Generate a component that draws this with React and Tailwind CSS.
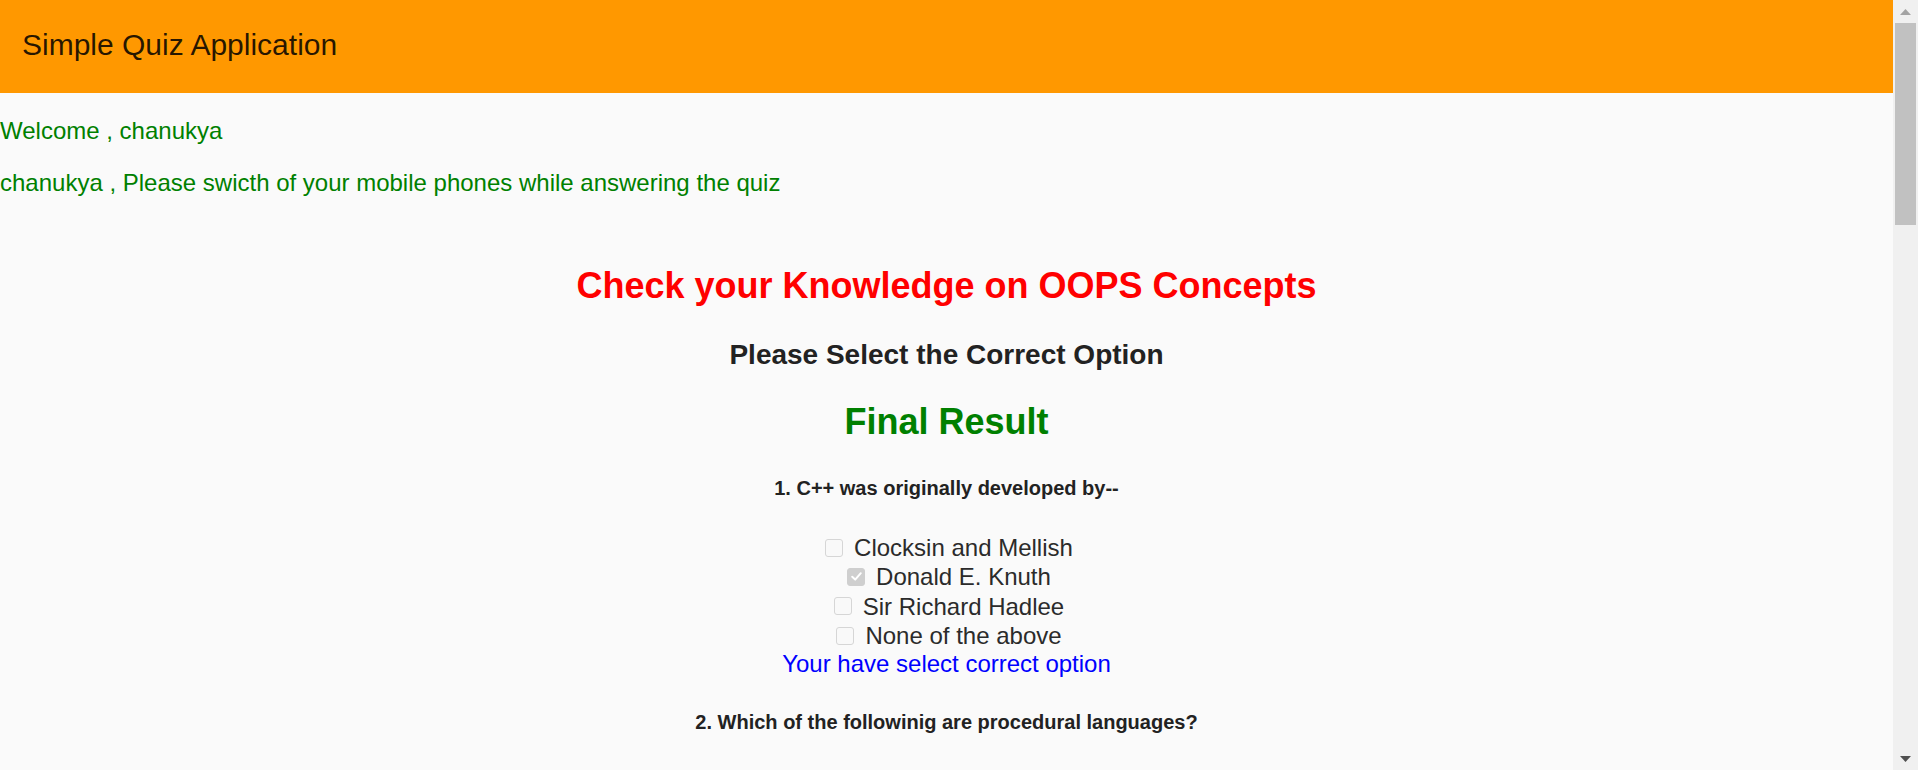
import React from "react";

function Box({ checked }) {
  return (
    <span
      className={
        "ml-[5px] mr-[11px] inline-flex h-[18px] w-[18px] shrink-0 items-center justify-center rounded-[3px] border " +
        (checked ? "border-[#cfcfcf] bg-[#cfcfcf]" : "border-[#d6d6d6] bg-[#f9f9f9]")
      }
    >
      {checked ? (
        <svg width="13" height="13" viewBox="0 0 13 13">
          <path d="M2.2 6.8 L5.2 9.6 L10.8 3.2" fill="none" stroke="#ffffff" strokeWidth="2" strokeLinecap="round" strokeLinejoin="round" />
        </svg>
      ) : null}
    </span>
  );
}

function Option({ label, checked }) {
  return (
    <div className="flex h-[29.3px] items-center justify-center text-[24px] leading-[29.3px] text-[#2b2b2b]">
      <Box checked={checked} />
      <span>{label}</span>
    </div>
  );
}

export default function App() {
  const q1 = [
    ["Clocksin and Mellish", false],
    ["Donald E. Knuth", true],
    ["Sir Richard Hadlee", false],
    ["None of the above", false],
  ];
  return (
    <div
      className="flex h-[770px] w-full overflow-hidden bg-[#fafafa]"
      style={{ fontFamily: '"Liberation Sans", Arial, sans-serif' }}
    >
      <div className="min-w-0 flex-1 overflow-hidden">
        <header className="flex h-[93px] items-center bg-[#ff9800] pb-[4px] pl-[22px] text-[30px] text-black/85">
          Simple Quiz Application
        </header>
        <p className="mt-[24px] text-[24px] leading-[28px] text-[#008000]">Welcome , chanukya</p>
        <p className="mt-[24px] text-[24px] leading-[28px] text-[#008000]">
          chanukya , Please swicth of your mobile phones while answering the quiz
        </p>
        <div className="text-center">
          <h1 className="mt-[68px] text-[36px] font-bold leading-[42px] text-[#ff0000]">
            Check your Knowledge on OOPS Concepts
          </h1>
          <h3 className="mt-[32px] text-[28px] font-bold leading-[32px] text-[#222222]">
            Please Select the Correct Option
          </h3>
          <h2 className="mt-[30px] text-[36px] font-bold leading-[42px] text-[#008000]">Final Result</h2>
          <div className="mt-[33px] text-[20px] font-bold leading-[24px] text-[#222222]">
            1. C++ was originally developed by--
          </div>
          <div className="mt-[33px]">
            {q1.map(([l, c]) => (
              <Option key={l} label={l} checked={c} />
            ))}
          </div>
          <div className="text-[24px] leading-[28px] text-[#0000ff]">Your have select correct option</div>
          <div className="mt-[32px] text-[20px] font-bold leading-[24px] text-[#222222]">
            2. Which of the followinig are procedural languages?
          </div>
        </div>
      </div>
      <div className="flex w-[25px] shrink-0 flex-col bg-[#f0f0f0]">
        <div className="flex h-[23px] items-center justify-center">
          <svg width="11" height="6" viewBox="0 0 11 6">
            <path d="M0 6 L5.5 0 L11 6 Z" fill="#a3a3a3" />
          </svg>
        </div>
        <div className="mx-[2px] h-[202px] bg-[#c1c1c1]" />
        <div className="flex-1" />
        <div className="flex h-[23px] items-center justify-center">
          <svg width="11" height="6" viewBox="0 0 11 6">
            <path d="M0 0 L11 0 L5.5 6 Z" fill="#505050" />
          </svg>
        </div>
      </div>
    </div>
  );
}
